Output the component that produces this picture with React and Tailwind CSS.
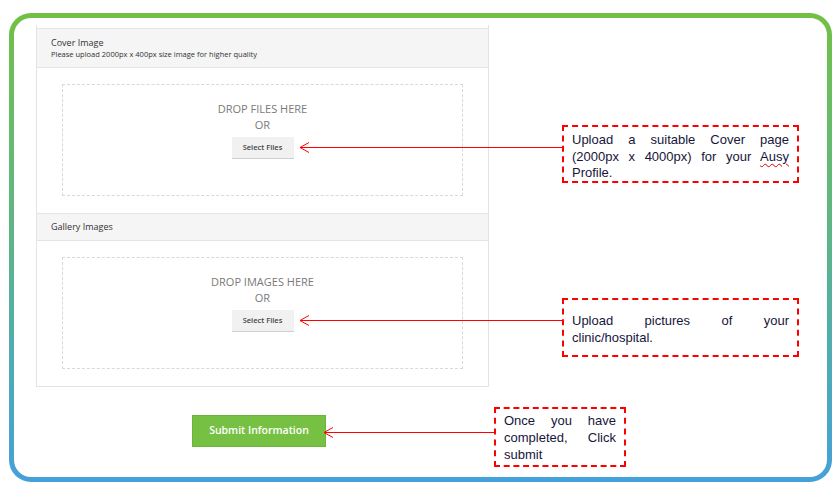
import React from "react";

function Arrow({ x, y, to }) {
  const w = to - x;
  return (
    <svg
      className="absolute"
      style={{ left: x, top: y - 6, width: w, height: 13 }}
      width={w}
      height={13}
      viewBox={`0 0 ${w} 13`}
    >
      <line x1="1" y1="6.5" x2={w} y2="6.5" stroke="#ff0000" strokeWidth="1" />
      <path d="M10 1.5 L1 6.5 L10 11.5" fill="none" stroke="#ff0000" strokeWidth="1" />
    </svg>
  );
}

function Line({ children, last }) {
  return (
    <div className={last ? "block text-left" : "block text-justify [text-align-last:justify]"}>
      {children}
    </div>
  );
}

function DropZone({ label }) {
  return (
    <div className="mx-[25px] h-[112px] border border-dashed border-[#d9d9d9] flex flex-col items-center pt-[16px]">
      <div className="text-[11px] leading-[16px] text-[#7a7a7a]">{label}</div>
      <div className="text-[11px] leading-[16px] text-[#7a7a7a]">OR</div>
      <button className="mt-[4px] w-[62px] h-[22px] bg-[#f1f1f1] border-b border-[#cfcfcf] text-[7.5px] font-semibold text-[#444]">
        Select Files
      </button>
    </div>
  );
}

export default function App() {
  return (
    <div className="relative w-[840px] h-[490px] bg-white overflow-hidden pt-[13px] pl-[9px]">
      <div className="w-[823px] h-[469px] rounded-[22px] p-[5px] bg-gradient-to-b from-[#72c043] via-[#5cb48a] to-[#44a0da]">
        <div className="w-full h-full rounded-[17px] bg-white pt-[7px] pl-[22px] font-['Open_Sans',sans-serif]">
          <div className="w-[453px] border-x border-b border-[#e3e3e3] pt-[3px]">
            <div className="h-[40px] border-y border-[#e4e4e4] bg-[#f5f5f5] px-[14px] flex flex-col justify-center">
              <div className="text-[9px] leading-[12px] text-[#333]">Cover Image</div>
              <div className="text-[7.5px] leading-[11px] text-[#333]">
                Please upload 2000px x 400px size image for higher quality
              </div>
            </div>
            <div className="pt-[16px] pb-[17px]">
              <DropZone label="DROP FILES HERE" />
            </div>
            <div className="h-[28px] border-y border-[#e4e4e4] bg-[#f5f5f5] px-[14px] flex items-center">
              <div className="text-[9px] leading-[12px] text-[#333]">Gallery Images</div>
            </div>
            <div className="pt-[16px] pb-[17px]">
              <DropZone label="DROP IMAGES HERE" />
            </div>
          </div>
          <button className="mt-[28px] ml-[156px] w-[134px] h-[32px] bg-[#76c143] border border-[#6cb53b] text-white text-[10.5px] font-semibold">
            Submit Information
          </button>
        </div>
      </div>

      <Arrow x={299} y={147} to={563} />
      <Arrow x={299} y={320} to={563} />
      <Arrow x={323} y={432} to={495} />

      <div className="absolute left-[562px] top-[125px] w-[237px] h-[58px] border-2 border-dashed border-[#ff0000] bg-white pl-[8px] pr-[8px] pt-[5px] font-['Liberation_Sans',Arial,sans-serif] text-[13px] leading-[16.5px] text-[#16163a]">
        <Line>Upload a suitable Cover page</Line>
        <Line>
          (2000px x 4000px) for your{" "}
          <span className="underline decoration-wavy decoration-[#e00000] decoration-1 underline-offset-2">Ausy</span>
        </Line>
        <Line last>Profile.</Line>
      </div>

      <div className="absolute left-[562px] top-[298px] w-[237px] h-[59px] border-2 border-dashed border-[#ff0000] bg-white pl-[8px] pr-[8px] pt-[12px] font-['Liberation_Sans',Arial,sans-serif] text-[13px] leading-[17px] text-[#16163a]">
        <Line>Upload pictures of your</Line>
        <Line last>clinic/hospital.</Line>
      </div>

      <div className="absolute left-[494px] top-[407px] w-[132px] h-[60px] border-2 border-dashed border-[#ff0000] bg-white pl-[8px] pr-[8px] pt-[3px] font-['Liberation_Sans',Arial,sans-serif] text-[13px] leading-[17px] text-[#16163a]">
        <Line>Once you have</Line>
        <Line>completed, Click</Line>
        <Line last>submit</Line>
      </div>
    </div>
  );
}
